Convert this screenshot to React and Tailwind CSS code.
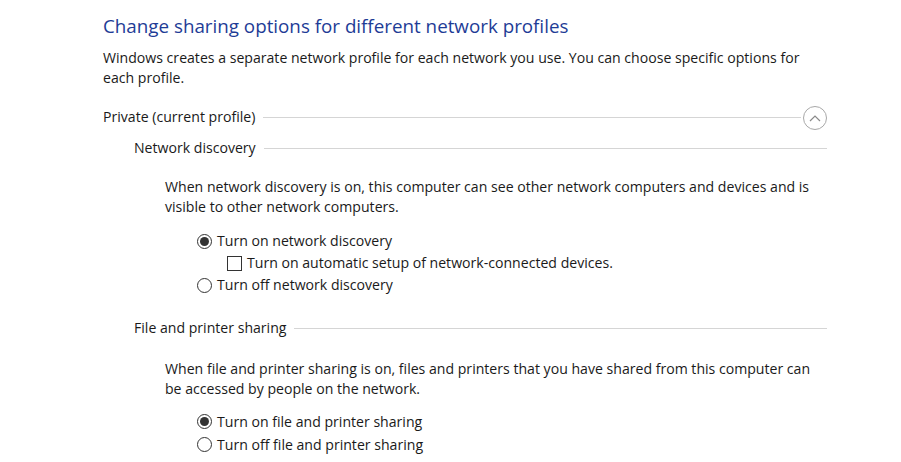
import React from "react";

const font = { fontFamily: '"Open Sans", "Noto Sans", sans-serif' };

function Radio({ checked }) {
  return (
    <span className="relative inline-flex h-[15px] w-[15px] shrink-0 items-center justify-center rounded-full border border-[#333] bg-white">
      {checked && <span className="h-[9px] w-[9px] rounded-full bg-[#333]" />}
    </span>
  );
}

function Checkbox() {
  return <span className="inline-block h-[15px] w-[15px] shrink-0 border border-[#333] bg-white" />;
}

function SectionHeader({ children, extra }) {
  return (
    <div className="flex items-center">
      <span className="whitespace-nowrap">{children}</span>
      <div className="ml-[8px] h-px flex-1 bg-[#d5d5d5]" />
      {extra}
    </div>
  );
}

export default function App() {
  return (
    <div className="h-[462px] w-[901px] overflow-hidden bg-white text-[14.1px] leading-[20px] text-[#1a1a1a]" style={font}>
      <div className="pl-[103px] pr-[74px] pt-[12px]">
        <h1 className="text-[18.8px] leading-[28px] text-[#1e3c96]">Change sharing options for different network profiles</h1>
        <p className="mt-[8px]">
          Windows creates a separate network profile for each network you use. You can choose specific options for each profile.
        </p>
        <div className="mt-[16px]">
          <SectionHeader
            extra={
              <span className="ml-[2px] mt-[2px] flex h-[24px] w-[24px] items-center justify-center rounded-full border border-[#a8a8a8]">
                <svg width="12" height="8" viewBox="0 0 12 8" fill="none">
                  <path d="M1 7 L6 2 L11 7" stroke="#8a8a8a" strokeWidth="1.2" />
                </svg>
              </span>
            }
          >
            Private (current profile)
          </SectionHeader>
        </div>
        <div className="pl-[31px]">
          <div className="mt-[8px]">
            <SectionHeader>Network discovery</SectionHeader>
          </div>
          <div className="pl-[31px] pr-[15px]">
            <p className="mt-[19px]">
              When network discovery is on, this computer can see other network computers and devices and is visible to other network computers.
            </p>
            <div className="mt-[13px] pl-[32px]">
              <label className="flex h-[22px] items-center gap-[5px]">
                <Radio checked />
                <span>Turn on network discovery</span>
              </label>
              <label className="flex h-[22px] items-center gap-[5px] pl-[30px]">
                <Checkbox />
                <span>Turn on automatic setup of network-connected devices.</span>
              </label>
              <label className="flex h-[22px] items-center gap-[5px]">
                <Radio />
                <span>Turn off network discovery</span>
              </label>
            </div>
          </div>
          <div className="mt-[22px]">
            <SectionHeader>File and printer sharing</SectionHeader>
          </div>
          <div className="pl-[31px] pr-[15px]">
            <p className="mt-[21px]">
              When file and printer sharing is on, files and printers that you have shared from this computer can be accessed by people on the network.
            </p>
            <div className="mt-[11px] pl-[32px]">
              <label className="flex h-[23px] items-center gap-[5px]">
                <Radio checked />
                <span>Turn on file and printer sharing</span>
              </label>
              <label className="flex h-[23px] items-center gap-[5px]">
                <Radio />
                <span>Turn off file and printer sharing</span>
              </label>
            </div>
          </div>
        </div>
      </div>
    </div>
  );
}
